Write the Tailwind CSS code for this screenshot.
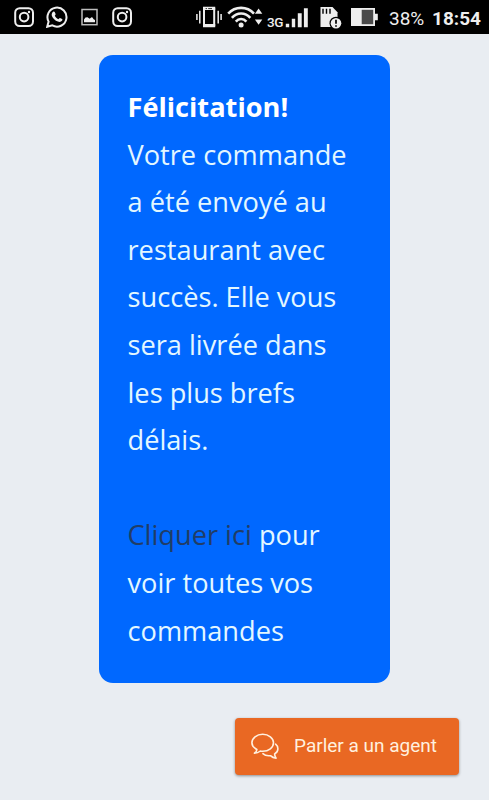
<!DOCTYPE html>
<html lang="fr">
<head>
    <meta charset="UTF-8">
    <meta name="viewport" content="width=device-width, initial-scale=1.0">
    <title>Commande envoyée</title>
    <script src="https://cdn.jsdelivr.net/npm/@tailwindcss/browser@4"></script>
</head>
<body class="bg-[#e9edf2] h-screen overflow-hidden flex flex-col font-['Open_Sans',sans-serif]">

    <!-- Status bar -->
    <header class="h-[34px] shrink-0 bg-black text-[#eeeeee] flex items-center pl-[14px] pr-2 font-[Roboto,sans-serif]">
        <svg class="w-5 h-5 shrink-0" viewBox="0 0 20 20" fill="none" stroke="currentColor" stroke-width="2">
            <rect x="1.2" y="1.2" width="17.8" height="17.8" rx="4.5"/>
            <circle cx="10.1" cy="10.1" r="4.3"/>
            <circle cx="15" cy="5" r="1.2" fill="currentColor" stroke="none"/>
        </svg>
        <svg class="w-[22px] h-[22px] ml-3 shrink-0" viewBox="0 0 22 22" fill="none" stroke="currentColor" stroke-width="2">
            <path d="M1.2 20.8l1.4-5.2a9.5 9.5 0 1 1 3.7 3.8z"/>
            <path d="M7.2 5.8c.5-.5 1.2-.4 1.5.2l.9 2c.2.5-.7 1.4-.8 1.8.7 1.5 1.9 2.7 3.5 3.4.5-.1 1.2-1.3 1.7-1.2l2.1 1c.5.3.4 1-.1 1.8-.9 1.2-2.5 1.4-4.1.8-2.9-1-5-3.1-6-5.6-.5-1.6-.1-3.2 1.3-4.2z" fill="currentColor" stroke="none"/>
        </svg>
        <svg class="w-[17px] h-[18px] ml-[13px] shrink-0" viewBox="0 0 17 18" fill="none">
            <rect x="1" y="1.5" width="15" height="15.2" stroke="#bdbdbd" stroke-width="1.5"/>
            <path d="M3 14.2v-2.7l1.5-2 2-.3 2.2 1.6 1.8-1.5 1 .3 1.1 1.7 1.4.7v2.2z" fill="currentColor"/>
        </svg>
        <svg class="w-5 h-5 ml-[14px] shrink-0" viewBox="0 0 20 20" fill="none" stroke="currentColor" stroke-width="2">
            <rect x="1.2" y="1.2" width="17.8" height="17.8" rx="4.5"/>
            <circle cx="10.1" cy="10.1" r="4.3"/>
            <circle cx="15" cy="5" r="1.2" fill="currentColor" stroke="none"/>
        </svg>

        <!-- Vibrate -->
        <svg class="w-[26px] h-[22px] ml-16 shrink-0" viewBox="0 0 26 22" fill="none" stroke="currentColor">
            <path d="M.9 8v6M3.8 4.8v12.6M22.2 4.8v12.6M25.1 8v6" stroke-width="1.5"/>
            <path d="M8 2.8h10.2v16.4H8z" stroke-width="2"/>
            <path d="M7 2.4h12.2M7 19.6h12.2" stroke-width="3.4"/>
            <path d="M9.6 2.6h1.4m1.2 0h3.8" stroke="#000" stroke-width=".8"/>
        </svg>
        <!-- Wi-Fi with up/down activity -->
        <svg class="w-[36px] h-[24px] ml-[5px] shrink-0" viewBox="0 0 36 24" fill="none" stroke="currentColor" stroke-width="2.6">
            <path d="M1.2 8.6c7-7.6 18.8-7.6 25.8 0M4.9 12.8c5-5.7 13.4-5.7 18.4 0M8.8 16.6c3-3.4 7.6-3.4 10.6 0"/>
            <circle cx="14.1" cy="20" r="2.5" fill="currentColor" stroke="none"/>
            <path d="M31.6 3.4l3.7 5.4h-7.4zM27.9 14.4h7.4l-3.7 5.4z" fill="currentColor" stroke="none"/>
        </svg>
        <span class="ml-[4px] mt-[11px] w-[17px] shrink-0 text-[13.5px] leading-none font-medium tracking-tight">3G</span>
        <svg class="w-[23px] h-[22px] ml-[1px] shrink-0" viewBox="0 0 23 22" fill="currentColor">
            <path d="M.8 17.8h3.4V21.2H.8zM6.8 12.8h3.4v8.4H6.8zM12.8 7.2h3.9v14h-3.9zM18.9 2.2h3.9v19h-3.9z"/>
        </svg>
        <!-- SD card warning -->
        <svg class="w-[22px] h-[23px] ml-[12px] shrink-0" viewBox="0 0 22 23">
            <path d="M.5 1h12l5 5.3V21H.5z" fill="currentColor"/>
            <path d="M3 2.7v5M6.5 2.7v5M10 2.7v5" stroke="#000" stroke-width="1.4"/>
            <circle cx="16" cy="17.2" r="6.5" fill="#000"/>
            <circle cx="16" cy="17.2" r="5.3" fill="currentColor"/>
            <path d="M16 13.7v4.1M16 19.2v1.6" stroke="#000" stroke-width="1.7"/>
        </svg>
        <!-- Battery -->
        <svg class="w-[27px] h-[18px] ml-[9px] shrink-0" viewBox="0 0 27 18">
            <path d="M0 0h24v5.8h2.8v6.4H24V18H0z" fill="currentColor"/>
            <path d="M10.7 1.8h11.5v14.4H10.7z" fill="#4a4a4a"/>
        </svg>
        <span class="ml-[11px] mt-[2px] w-[36px] shrink-0 whitespace-nowrap text-[19px] leading-none">38%</span>
        <span class="ml-[7px] mt-[2px] shrink-0 whitespace-nowrap text-[19px] leading-none font-bold">18:54</span>
    </header>

    <main class="relative flex-1">
        <div class="ml-[99px] mt-[21px] w-[291px] h-[628px] pl-[28.5px] pr-7 pt-7 rounded-[14px] bg-[#0068ff] text-[27.2px] leading-[47.6px] text-[#e3f7ff]">
            <p class="font-bold text-white">Félicitation!</p>
            <p>Votre commande a été envoyé au restaurant avec succès. Elle vous sera livrée dans les plus brefs délais.</p>
            <br>
            <p><a href="#" class="text-[#213d66]">Cliquer ici</a> pour voir toutes vos commandes</p>
        </div>

        <button class="absolute right-[30px] bottom-[25px] w-[224px] h-[57px] pl-4 flex items-center rounded-[4px] bg-[#e96823] text-[#fff0df] shadow-[0_1px_3px_rgba(0,0,0,0.4)] font-[Roboto,sans-serif] text-[19px]">
            <svg class="w-[28px] h-[27px] shrink-0" viewBox="0 0 28 27" fill="none" stroke="currentColor" stroke-width="1.6" stroke-linejoin="round" stroke-linecap="round">
                <path d="M3.4 20.2c1.6-.9 2.4-2.1 2.5-3.7C2.8 14.8.9 12.5.9 9.8.9 5.1 5.7 1.3 11.7 1.3s10.8 3.8 10.8 8.5-4.8 8.4-10.8 8.4c-.8 0-1.6 0-2.3-.2-1.7 1.4-3.7 2.2-6 2.2z"/>
                <path d="M24.6 11.2c1.5 1.2 2.3 2.8 2.3 4.5 0 2.3-1.2 4.1-3.3 5.2.1 1.6.5 2.9 1.5 4.3-2.3-.2-4.2-1.1-5.7-2.5-3.2.4-5.8-.4-7.5-2"/>
            </svg>
            <span class="ml-[15px] -mt-px whitespace-nowrap">Parler a un agent</span>
        </button>
    </main>

</body>
</html>
